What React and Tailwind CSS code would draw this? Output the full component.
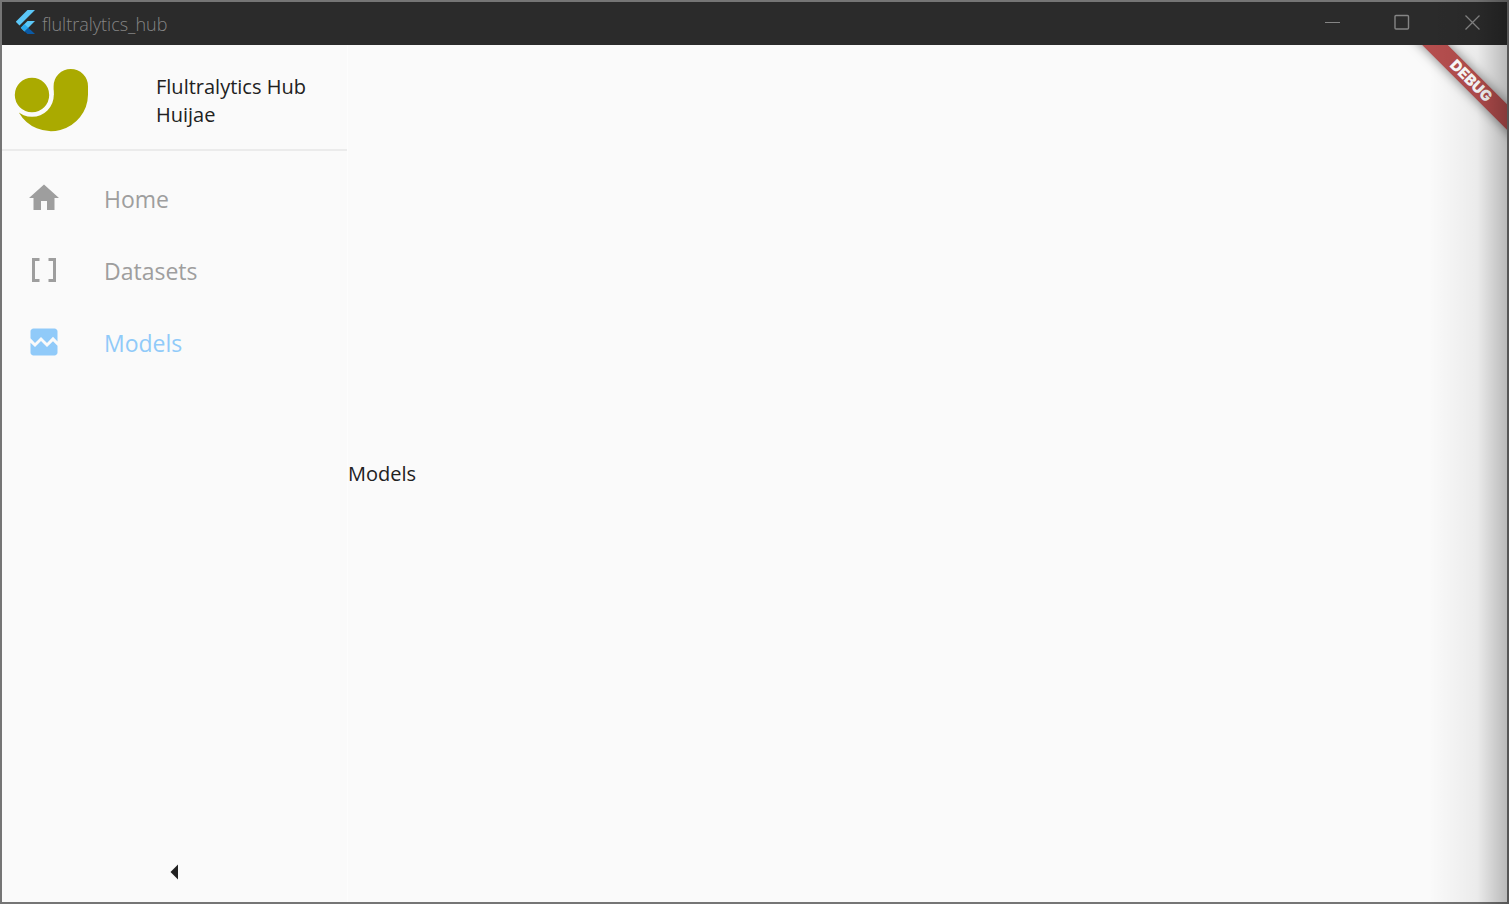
import { useState } from "react";

const items = [
    {
        name: "Home",
        path: "M10 20v-6h4v6h5v-8h3L12 3 2 12h3v8z",
    },
    {
        name: "Datasets",
        path: "M15 4v2h3v12h-3v2h5V4zM4 20h5v-2H6V6h3V4H4z",
    },
    {
        name: "Models",
        path: "M21 5v6.59l-3-3.01-4 4.01-4-4-4 4-3-3.01V5c0-1.1.9-2 2-2h14c1.1 0 2 .9 2 2zm-3 6.42l3 3.01V19c0 1.1-.9 2-2 2H5c-1.1 0-2-.9-2-2v-6.58l3 2.99 4-4 4 4 4-3.99z",
    },
];

function FlutterLogo() {
    return (
        <svg className="mb-1 h-6 w-5" viewBox="0 0 20 24" aria-hidden="true">
            <path fill="#5cc8f8" d="M11.5 0h7.5L3.5 15.5 -.2 11.8z" />
            <path fill="#5cc8f8" d="M11.5 11h7.5l-6.7 6.7L8.5 21.5 4.8 17.7z" />
            <path fill="#29a9ee" d="M4.8 17.7L8.5 14l3.8 3.7L8.5 21.5z" />
            <path fill="#0b5aa5" d="M8.5 21.5l3.8-3.8 6.7 6.3H11.5z" />
        </svg>
    );
}

function TitleBar() {
    return (
        <header className="flex h-[43px] items-center justify-between bg-[#2b2b2b] text-[#858585]">
            <div className="flex items-center gap-1.5 pl-[14px]">
                <FlutterLogo />
                <span className="text-[18px] leading-6 font-light">flultralytics_hub</span>
            </div>
            <div className="flex h-full pb-1">
                <button aria-label="Minimize" className="flex w-[70px] items-center justify-center">
                    <svg className="size-4" viewBox="0 0 16 16" fill="none" stroke="currentColor">
                        <path d="M1 8.5h15" />
                    </svg>
                </button>
                <button aria-label="Maximize" className="flex w-[70px] items-center justify-center">
                    <svg className="size-4" viewBox="0 0 16 16" fill="none" stroke="currentColor" strokeWidth="1.4">
                        <rect x="1" y="1.5" width="13.5" height="13.5" rx="1" />
                    </svg>
                </button>
                <button aria-label="Close" className="flex w-[70px] items-center justify-center">
                    <svg className="size-4" viewBox="0 0 16 16" fill="none" stroke="currentColor" strokeWidth="1.3">
                        <path d="M1.5 1.5l14 14M15.5 1.5l-14 14" />
                    </svg>
                </button>
            </div>
        </header>
    );
}

function Sidebar({ selected, onSelect }) {
    return (
        <aside className="flex w-[346px] shrink-0 flex-col border-r border-[#fdfdfd]">
            <div className="flex h-[106px] items-center border-b-2 border-[#ebebeb] pt-2 pl-3">
                <svg className="h-16 w-[76px]" viewBox="0 0 76 64" fill="#aaaa00" aria-hidden="true">
                    <path d="M39.6 17.2a17.2 17.2 0 0 1 34.4 0v8.500a37 37 0 0 1-69 18L18 26h21.600z" />
                    {/* the ring keeps the ball clear of the body */}
                    <circle cx="18" cy="26" r="19.5" stroke="#fafafa" strokeWidth="4.6" />
                </svg>
                <div className="pl-[66px] text-[20px] leading-7 text-[#212121]">
                    <p>Flultralytics Hub</p>
                    <p>Huijae</p>
                </div>
            </div>
            <nav className="flex flex-col pt-3">
                {items.map((item) => (
                    <button
                        key={item.name}
                        onClick={() => onSelect(item.name)}
                        className={`flex h-[72px] items-center gap-[42px] pl-6 text-left text-[23px] leading-8 ${
                            selected === item.name ? "text-[#90caf9]" : "text-[#9e9e9e]"
                        }`}
                    >
                        <svg className="mb-[3px] size-9" viewBox="0 0 24 24" fill="currentColor" aria-hidden="true">
                            <path d={item.path} />
                        </svg>
                        {item.name}
                    </button>
                ))}
            </nav>
            <button aria-label="Collapse menu" className="mt-auto flex h-[60px] items-center justify-center text-[#212121]">
                <svg className="size-9" viewBox="0 0 24 24" fill="currentColor">
                    <path d="M14 7l-5 5 5 5z" />
                </svg>
            </button>
        </aside>
    );
}

export default function App() {
    const [page, setPage] = useState("Models");

    return (
        <div className="relative flex min-h-screen flex-col border-2 border-[#757575] bg-[#fafafa] font-['Open_Sans',sans-serif]">
            <TitleBar />
            <div className="relative flex flex-1 overflow-hidden">
                <Sidebar selected={page} onSelect={setPage} />
                <main className="flex flex-1 items-center text-[20px] leading-7 text-[#212121]">{page}</main>
                {/* debug ribbon */}
                <div className="absolute top-[27px] -right-16 flex h-[18px] w-[200px] rotate-45 items-center justify-center bg-[#b54e4e] font-['Inter',sans-serif] text-[15px] leading-4 font-black text-white shadow-[0_0_12px_rgba(0,0,0,0.5)]">
                    DEBUG
                </div>
            </div>
            <div className="pointer-events-none absolute -inset-y-0.5 -right-0.5 w-20 bg-linear-to-r from-transparent via-black/6 via-60% to-black/27" />
        </div>
    );
}
